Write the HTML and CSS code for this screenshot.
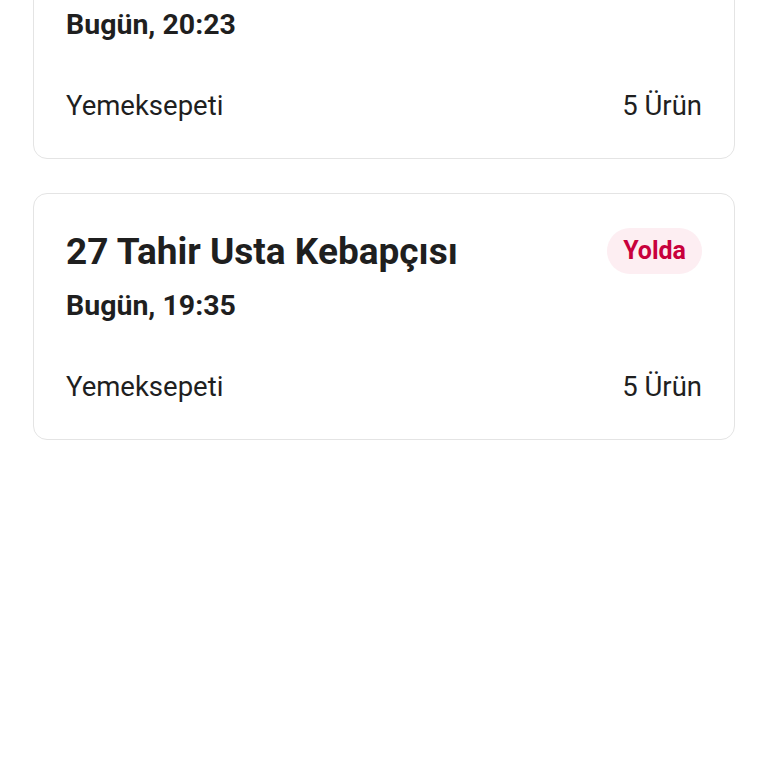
FILE: index.html
```html
<!DOCTYPE html>
<html lang="tr">
<head>
<meta charset="utf-8">
<link rel="stylesheet" href="styles.css">
</head>
<body>
<main class="orders">
  <section class="card">
    <div class="card-head">
      <h2 class="title">Köfteci Yusuf</h2>
      <span class="badge">Yolda</span>
    </div>
    <div class="date">Bugün, 20:23</div>
    <div class="card-foot">
      <span class="source">Yemeksepeti</span>
      <span class="count">5 Ürün</span>
    </div>
  </section>
  <section class="card">
    <div class="card-head">
      <h2 class="title">27 Tahir Usta Kebapçısı</h2>
      <span class="badge">Yolda</span>
    </div>
    <div class="date">Bugün, 19:35</div>
    <div class="card-foot">
      <span class="source">Yemeksepeti</span>
      <span class="count">5 Ürün</span>
    </div>
  </section>
</main>
</body>
</html>
```
FILE: styles.css
```css
html, body {
  margin: 0;
  padding: 0;
  background: #ffffff;
  overflow: hidden;
}
body {
  font-family: Roboto, "Noto Sans", sans-serif;
  color: #1f1f1f;
  height: 768px;
}
.orders {
  display: flex;
  flex-direction: column;
  gap: 34px;
  padding: 0 33px;
  margin-top: -88px;
}
.card {
  border: 1px solid #e4e4e4;
  border-radius: 14px;
  padding: 34px 32px 35px 32px;
  display: flex;
  flex-direction: column;
}
.card-head {
  display: flex;
  justify-content: space-between;
  align-items: center;
  height: 46px;
}
.title {
  margin: 0;
  font-size: 37px;
  font-weight: 700;
  color: #1f1f1f;
}
.badge {
  background: #fdeef2;
  color: #c8003c;
  font-weight: 700;
  font-size: 25px;
  height: 46px;
  line-height: 46px;
  padding: 0 16px;
  border-radius: 23px;
}
.date {
  font-size: 28.5px;
  font-weight: 700;
  margin-top: 15px;
  line-height: 34px;
}
.card-foot {
  display: flex;
  justify-content: space-between;
  font-size: 27.5px;
  line-height: 34px;
  margin-top: 47px;
}
```
